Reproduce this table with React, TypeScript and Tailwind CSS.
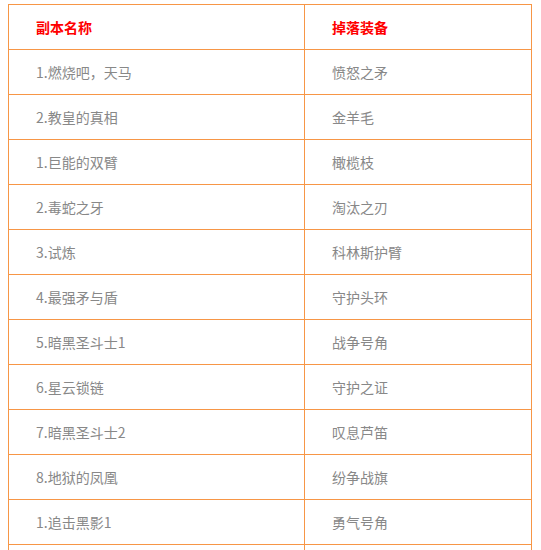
const rows: [string, string][] = [
  ["1.燃烧吧，天马", "愤怒之矛"],
  ["2.教皇的真相", "金羊毛"],
  ["1.巨能的双臂", "橄榄枝"],
  ["2.毒蛇之牙", "淘汰之刃"],
  ["3.试炼", "科林斯护臂"],
  ["4.最强矛与盾", "守护头环"],
  ["5.暗黑圣斗士1", "战争号角"],
  ["6.星云锁链", "守护之证"],
  ["7.暗黑圣斗士2", "叹息芦笛"],
  ["8.地狱的凤凰", "纷争战旗"],
  ["1.追击黑影1", "勇气号角"],
  // next row only shows its borders at the bottom edge
  ["", ""],
];

const cell = "h-[45px] flex items-center pl-[27px] border-r border-b border-[#f79646]";

export default function App() {
  return (
    <div
      className="bg-white h-[550px] overflow-hidden pt-[4px] pl-[8px]"
      style={{ fontFamily: '"Microsoft YaHei", "Noto Sans CJK SC", sans-serif' }}
    >
      <div className="grid grid-cols-[296px_227px] border-l border-t border-[#f79646] w-[524px] text-[14px]">
        <div className={`${cell} text-[#ff0000] font-bold`}>副本名称</div>
        <div className={`${cell} text-[#ff0000] font-bold`}>掉落装备</div>
        {rows.map(([name, drop], i) => (
          <div key={i} className="contents">
            <div className={`${cell} text-[#888888]`}>{name}</div>
            <div className={`${cell} text-[#888888]`}>{drop}</div>
          </div>
        ))}
      </div>
    </div>
  );
}
